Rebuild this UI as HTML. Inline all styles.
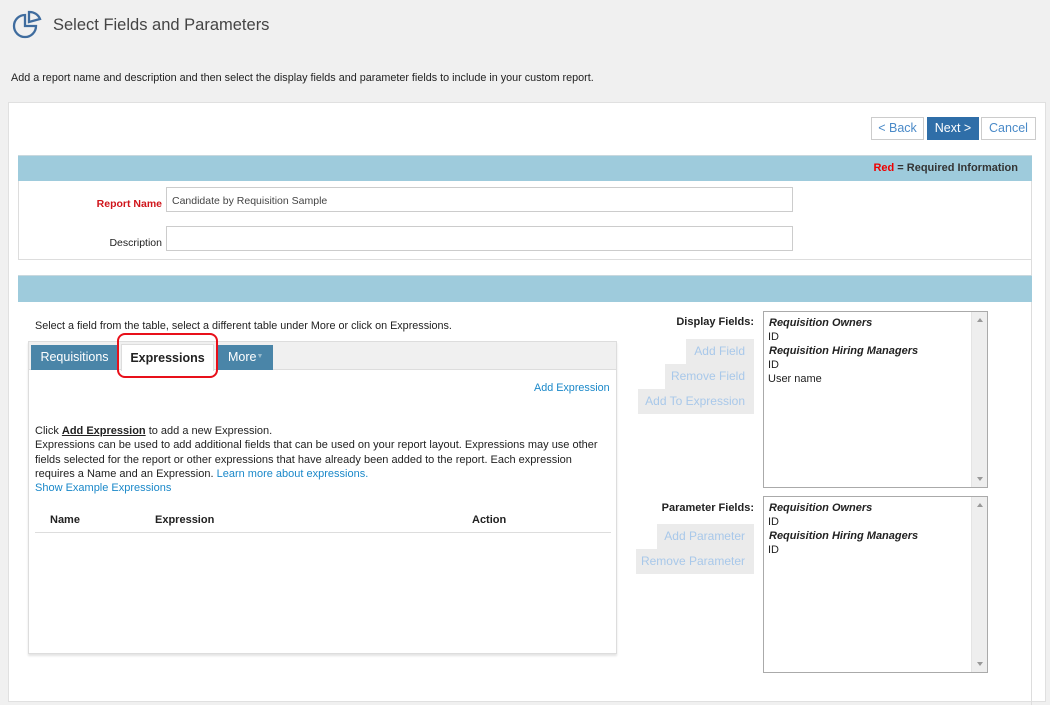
<!DOCTYPE html>
<html><head><meta charset="utf-8"><style>
*{box-sizing:border-box;margin:0;padding:0}
body{width:1050px;height:688px;background:#f0f0f0;font-family:"Liberation Sans",Arial,sans-serif;font-size:12px;color:#222;position:relative;overflow:hidden}
.a{position:absolute}
.btn{position:absolute;height:23px;font-size:12.5px;line-height:21px;text-align:center;border:1px solid #ccc;background:#fff;color:#4a8ac8}
.gb{position:absolute;background:#ebebeb;color:#a8c8ea;font-size:12px;text-align:right;padding-right:9px;line-height:25px;height:25px}
.lb{position:absolute;left:763px;width:225px;height:177px;border:1px solid #aaa;background:#fff;padding:4px 0 0 4px;font-size:11px;line-height:14px}
.lb b{font-style:italic;color:#222;padding-left:1px}
.sb{position:absolute;right:0;top:0;width:16px;height:100%;background:#eee;border-left:1px solid #e4e4e4}
.sb:before{content:"";position:absolute;left:5px;top:6px;border:3px solid transparent;border-bottom:4px solid #999;border-top:0}
.sb:after{content:"";position:absolute;left:5px;bottom:6px;border:3px solid transparent;border-top:4px solid #999;border-bottom:0}
.lk{color:#1a88c9}
.r{text-align:right}
</style></head><body>
<svg class="a" style="left:12px;top:10px" width="32" height="30" viewBox="0 0 32 30"><path d="M13 5 A11 11 0 1 0 24 16 L13 16 Z" fill="none" stroke="#3f6c9e" stroke-width="2.3"/><path d="M17 2 L17 12 L28 9 A11 11 0 0 0 17 2 Z" fill="none" stroke="#3f6c9e" stroke-width="2.3"/></svg>
<div class="a" style="left:53px;top:16px;font-size:16.5px;color:#444">Select Fields and Parameters</div>
<div class="a" style="left:11px;top:72px;font-size:10.8px;color:#222">Add a report name and description and then select the display fields and parameter fields to include in your custom report.</div>
<div class="a" style="left:8px;top:102px;width:1038px;height:600px;background:#fff;border:1px solid #e0e0e0"></div>
<div class="a" style="left:1031px;top:155px;width:1px;height:550px;background:#ddd"></div>
<div class="btn" style="left:871px;top:117px;width:53px">&lt; Back</div>
<div class="btn" style="left:927px;top:117px;width:52px;background:#2f6ea8;border-color:#2f6ea8;color:#fff">Next &gt;</div>
<div class="btn" style="left:981px;top:117px;width:55px">Cancel</div>
<div class="a" style="left:18px;top:155px;width:1014px;height:26px;background:#9ecbdc;border-top:1px solid #c8d8de"></div>
<div class="a r" style="left:800px;width:218px;top:162px;font-size:11px;font-weight:bold;color:#333"><span style="color:#e00">Red</span> = Required Information</div>
<div class="a" style="left:18px;top:181px;width:1px;height:79px;background:#ddd"></div>
<div class="a" style="left:18px;top:259px;width:1014px;height:1px;background:#ddd"></div>
<div class="a r" style="left:60px;width:102px;top:198px;font-size:10.5px;font-weight:bold;color:#d0151b">Report Name</div>
<div class="a" style="left:166px;top:187px;width:627px;height:25px;border:1px solid #ccc;padding:7px 5px;font-size:10.5px;color:#444">Candidate by Requisition Sample</div>
<div class="a r" style="left:60px;width:102px;top:237px;font-size:10.5px;color:#222">Description</div>
<div class="a" style="left:166px;top:226px;width:627px;height:25px;border:1px solid #ccc"></div>
<div class="a" style="left:18px;top:275px;width:1014px;height:27px;background:#9ecbdc;border-top:1px solid #c8d8de"></div>
<div class="a" style="left:35px;top:320px;font-size:10.8px;color:#222">Select a field from the table, select a different table under More or click on Expressions.</div>
<div class="a" style="left:28px;top:341px;width:589px;height:313px;border:1px solid #ddd;background:#fff;box-shadow:0 2px 2px #e4e4e4"></div>
<div class="a" style="left:29px;top:342px;width:587px;height:28px;background:#f0f0f0;border-bottom:1px solid #ddd"></div>
<div class="a" style="left:31px;top:345px;width:87px;height:25px;background:#4a85a8;color:#fff;font-size:12.5px;line-height:24px;text-align:center">Requisitions</div>
<div class="a" style="left:121px;top:344px;width:93px;height:27px;background:#fff;border:1px solid #ddd;border-bottom:0;font-size:12.5px;font-weight:bold;line-height:26px;text-align:center;color:#222">Expressions</div>
<div class="a" style="left:218px;top:345px;width:55px;height:25px;background:#4a85a8;color:#fff;font-size:12.5px;line-height:24px;padding-left:10px">More<span style="font-size:7px;color:#9bc;vertical-align:3px">▼</span></div>
<div class="a" style="left:117px;top:333px;width:101px;height:45px;border:2px solid #e8101a;border-radius:8px"></div>
<div class="a lk" style="left:534px;top:382px;font-size:10.8px">Add Expression</div>
<div class="a" style="left:35px;top:424px;font-size:11px;line-height:14.3px;width:572px;color:#222">Click <b style="text-decoration:underline">Add Expression</b> to add a new Expression.<br>Expressions can be used to add additional fields that can be used on your report layout. Expressions may use other fields selected for the report or other expressions that have already been added to the report. Each expression requires a Name and an Expression. <span class="lk">Learn more about expressions.</span><br><span class="lk">Show Example Expressions</span></div>
<div class="a" style="left:50px;top:514px;font-size:11px;font-weight:bold">Name</div>
<div class="a" style="left:155px;top:514px;font-size:11px;font-weight:bold">Expression</div>
<div class="a" style="left:472px;top:514px;font-size:11px;font-weight:bold">Action</div>
<div class="a" style="left:35px;top:532px;width:576px;height:1px;background:#ddd"></div>
<div class="a r" style="left:640px;width:114px;top:316px;font-size:11px;font-weight:bold">Display Fields:</div>
<div class="gb" style="left:686px;top:339px;width:68px">Add Field</div>
<div class="gb" style="left:665px;top:364px;width:89px">Remove Field</div>
<div class="gb" style="left:638px;top:389px;width:116px">Add To Expression</div>
<div class="lb" style="top:311px"><b>Requisition Owners</b><br>ID<br><b>Requisition Hiring Managers</b><br>ID<br>User name<div class="sb"></div></div>
<div class="a r" style="left:640px;width:114px;top:502px;font-size:11px;font-weight:bold">Parameter Fields:</div>
<div class="gb" style="left:657px;top:524px;width:97px">Add Parameter</div>
<div class="gb" style="left:636px;top:549px;width:118px">Remove Parameter</div>
<div class="lb" style="top:496px"><b>Requisition Owners</b><br>ID<br><b>Requisition Hiring Managers</b><br>ID<div class="sb"></div></div>
</body></html>
